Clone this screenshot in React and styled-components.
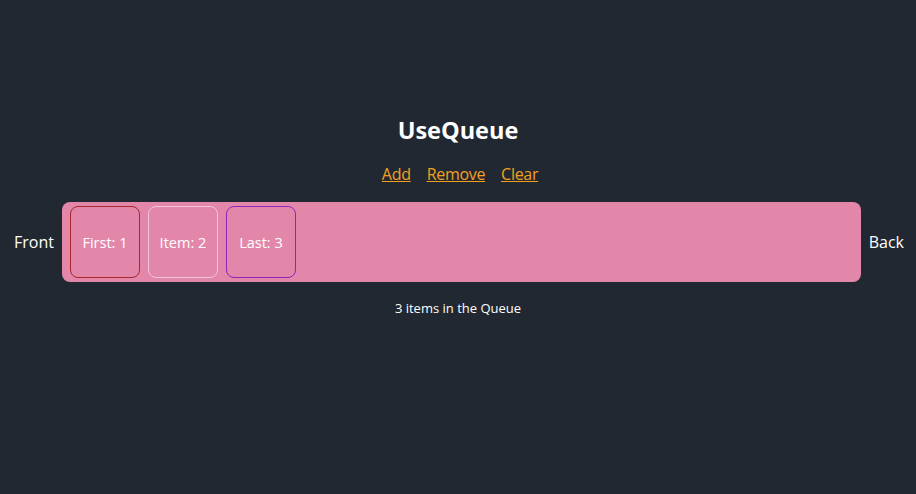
import React from "react";
import styled, { createGlobalStyle } from "styled-components";

const GlobalStyle = createGlobalStyle`
  html, body {
    margin: 0;
    padding: 0;
    background-color: #222831;
    font-family: "Open Sans", "Liberation Sans", sans-serif;
    color: #ffffff;
  }
`;

const items = [
  { label: "First: 1", border: "#a8262c" },
  { label: "Item: 2", border: "#f4c3de" },
  { label: "Last: 3", border: "#9324b8" },
];

function App() {
  return (
    <Page>
      <GlobalStyle />
      <Title>UseQueue</Title>
      <Actions>
        <ActionLink href="#">Add</ActionLink>
        <ActionLink href="#">Remove</ActionLink>
        <ActionLink href="#">Clear</ActionLink>
      </Actions>
      <QueueRow>
        <EndLabel>Front</EndLabel>
        <QueueBox>
          {items.map((item) => (
            <QueueItem key={item.label} $border={item.border}>
              {item.label}
            </QueueItem>
          ))}
        </QueueBox>
        <EndLabel>Back</EndLabel>
      </QueueRow>
      <Count>3 items in the Queue</Count>
    </Page>
  );
}

const Page = styled.div`
  width: 916px;
  height: 494px;
  display: flex;
  flex-direction: column;
  align-items: center;
  padding-top: 113px;
  box-sizing: border-box;
`;

const Title = styled.h1`
  margin: 0;
  font-size: 23.5px;
  font-weight: 700;
  line-height: 34px;
`;

const Actions = styled.div`
  display: flex;
  gap: 16px;
  margin-top: 17px;
  margin-left: 4px;
`;

const ActionLink = styled.a`
  color: #f3a01f;
  font-size: 16px;
  line-height: 20px;
  letter-spacing: -0.3px;
  text-decoration: underline;
`;

const QueueRow = styled.div`
  width: 100%;
  box-sizing: border-box;
  display: flex;
  align-items: center;
  gap: 8px;
  padding: 0 12px 0 14px;
  margin-top: 18px;
`;

const EndLabel = styled.span`
  font-size: 16px;
`;

const QueueBox = styled.div`
  flex: 1;
  height: 80px;
  box-sizing: border-box;
  background-color: #e287a9;
  border-radius: 8px;
  padding: 4px 8px;
  display: flex;
  gap: 8px;
`;

const QueueItem = styled.div`
  width: 70px;
  height: 72px;
  box-sizing: border-box;
  border: 1px solid ${(p) => p.$border};
  border-radius: 8px;
  display: flex;
  align-items: center;
  justify-content: center;
  font-size: 14.5px;
  color: #ffffff;
`;

const Count = styled.p`
  margin: 17px 0 0;
  font-size: 13px;
  line-height: 18px;
`;

export default App;
